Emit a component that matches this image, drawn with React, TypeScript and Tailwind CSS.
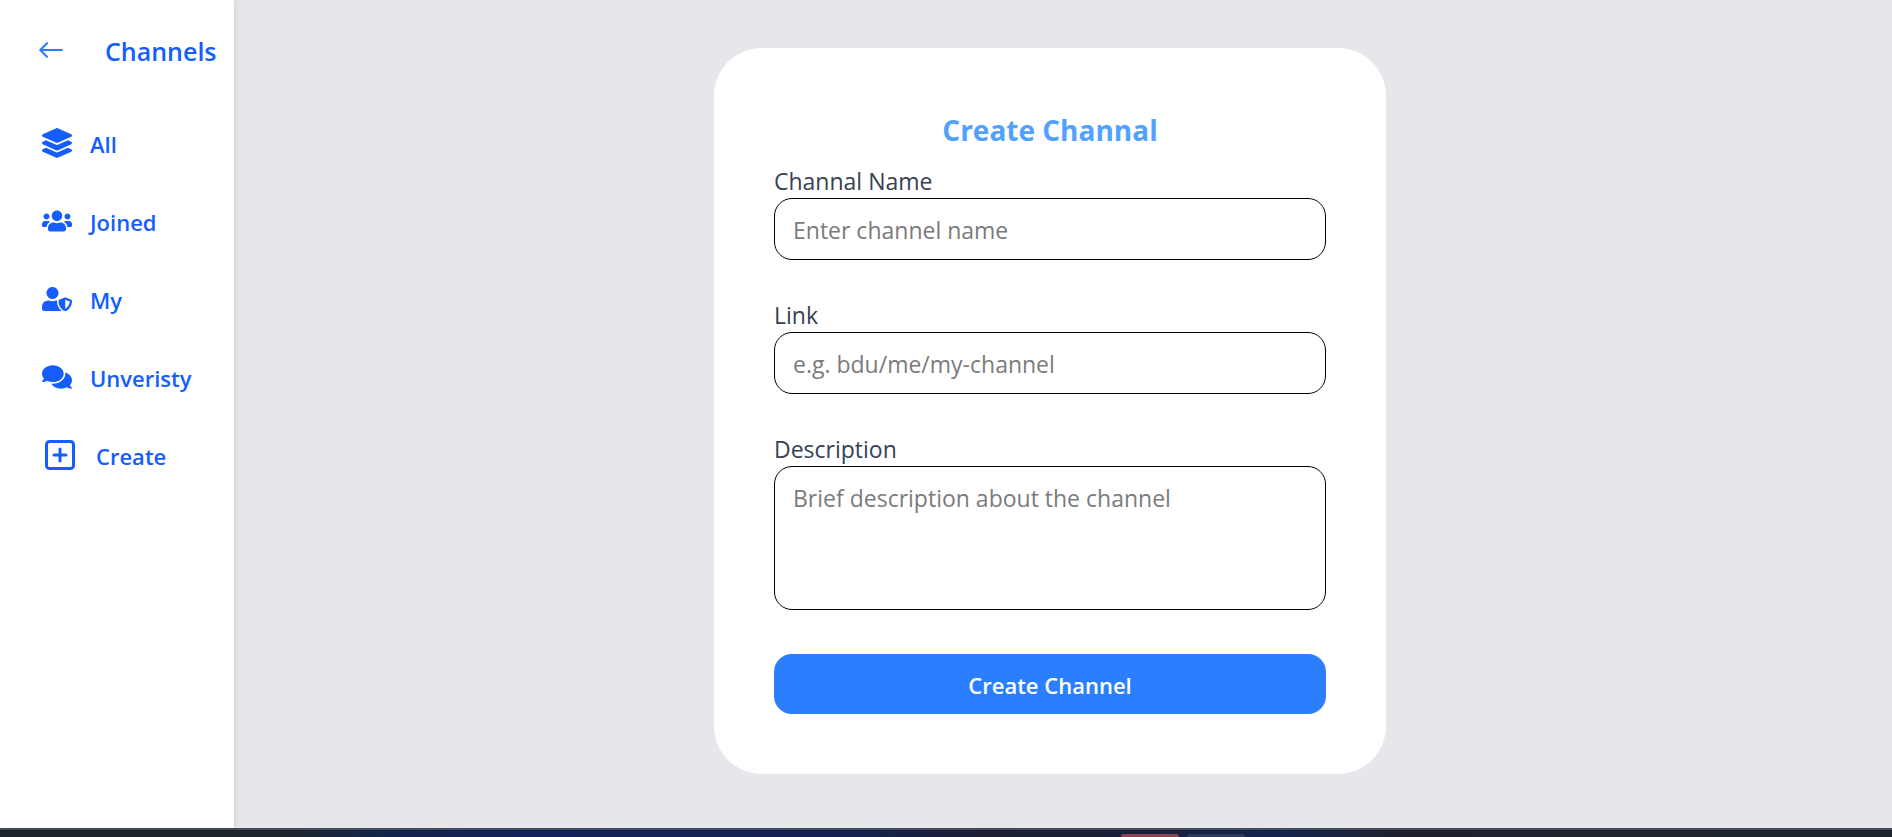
import React from "react";
import { FaLayerGroup, FaUsers, FaUserShield, FaComments } from "react-icons/fa";
import { IoIosArrowRoundBack } from "react-icons/io";
import { LuSquarePlus } from "react-icons/lu";

const navItems = [
  { label: "All", icon: <FaLayerGroup className="size-[30px] shrink-0" /> },
  { label: "Joined", icon: <FaUsers className="size-[30px] shrink-0" /> },
  { label: "My", icon: <FaUserShield className="size-[30px] shrink-0" /> },
  { label: "Unveristy", icon: <FaComments className="size-[30px] shrink-0" /> },
  { label: "Create", icon: <LuSquarePlus className="size-9 shrink-0" /> },
];

function Sidebar() {
  return (
    <aside className="z-10 w-[234px] shrink-0 bg-white text-[#155dfc] shadow-[2px_0_6px_rgba(0,0,0,0.08)]">
      <div className="flex items-center gap-[33px] pt-[29px] pl-[30px]">
        <button type="button" aria-label="Back" className="text-[#2b7fff]">
          <IoIosArrowRoundBack className="size-[42px]" />
        </button>
        <h1 className="pt-0.5 text-[25px] leading-10 font-semibold">Channels</h1>
      </div>
      <nav className="mt-[54px] flex flex-col gap-[42px] pl-[42px]">
        {navItems.map((item) => (
          <a key={item.label} href="#" className="flex h-9 items-center gap-[18px] text-[22px] font-semibold">
            {item.icon}
            <span className="pt-0.5">{item.label}</span>
          </a>
        ))}
      </nav>
    </aside>
  );
}

const labelClass = "block pt-0.5 leading-[34px]";
const fieldClass =
  "block w-full resize-none rounded-[18px] border border-black px-[18px] pt-[13px] pb-[11px] leading-9 text-black placeholder:text-[#7b7b7b]";

function ChannelForm() {
  return (
    <form className="w-full max-w-[672px] rounded-[48px] bg-white p-[60px] text-[23px] text-[#364153]">
      <h2 className="pt-0.5 text-center text-[28px] leading-10 font-bold text-[#51a2ff]">Create Channal</h2>
      <div className="mt-3">
        <label htmlFor="name" className={labelClass}>Channal Name</label>
        <input id="name" placeholder="Enter channel name" className={fieldClass} />
      </div>
      <div className="mt-9">
        <label htmlFor="link" className={labelClass}>Link</label>
        <input id="link" placeholder="e.g. bdu/me/my-channel" className={fieldClass} />
      </div>
      <div className="mt-9">
        <label htmlFor="description" className={labelClass}>Description</label>
        <textarea id="description" placeholder="Brief description about the channel" className={`${fieldClass} h-36`} />
      </div>
      <button type="button" className="mt-11 h-[60px] w-full rounded-[18px] bg-[#2b7fff] pt-0.5 text-[22px] font-semibold text-white">
        Create Channel
      </button>
    </form>
  );
}

function BottomBar() {
  return (
    <footer className="flex h-[9px] items-end justify-center gap-2 border-t-2 border-[#43495a] bg-[linear-gradient(to_right,#1e242b_0%,#1e242b_15%,#12254a_20%,#13205a_28%,#14204e_45%,#1c1f33_52%,#1b2038_60%,#12244e_67%,#1d212c_74%,#1e242b_100%)]">
      <span className="ml-[474px] h-[3px] w-[58px] rounded-t-md bg-[#8c4650]" />
      <span className="h-[3px] w-[58px] rounded-t-md bg-[#2d3a5e]" />
    </footer>
  );
}

export default function App() {
  return (
    <div className="flex min-h-screen flex-col bg-[#e5e7eb] font-['Open_Sans',sans-serif]">
      <div className="flex grow">
        <Sidebar />
        <main className="flex grow items-start justify-center pt-12 pr-[26px] pb-12">
          <ChannelForm />
        </main>
      </div>
      <BottomBar />
    </div>
  );
}
